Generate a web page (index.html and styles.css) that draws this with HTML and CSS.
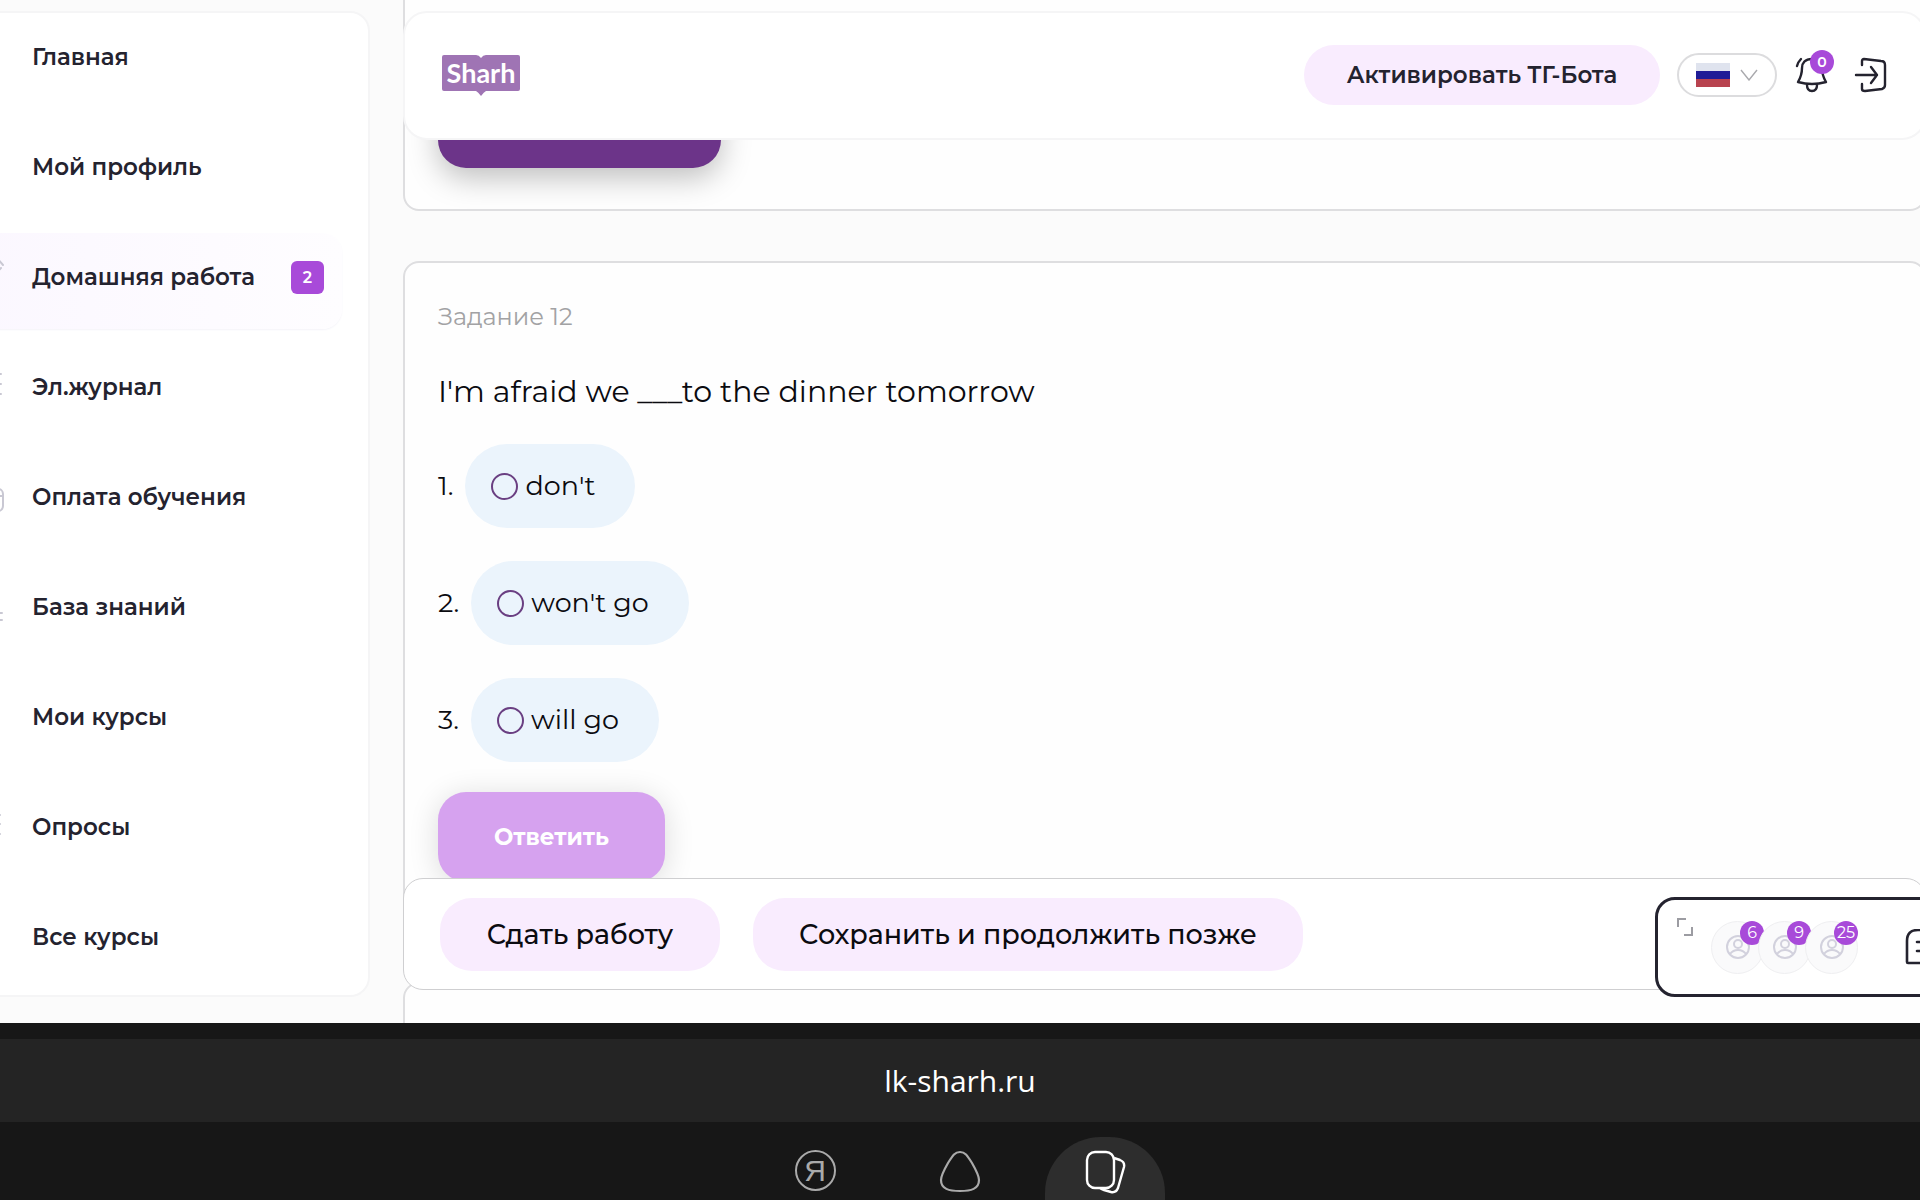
FILE: index.html
```html
<!DOCTYPE html>
<html lang="ru">
<head>
<meta charset="utf-8">
<title>Sharh — Домашняя работа</title>
<link rel="stylesheet" href="styles.css">
</head>
<body>
<div class="app">
  <aside class="sidebar">
    <nav class="menu">
      <a class="menu-item" href="#"><span class="menu-icon"></span>Главная</a>
      <a class="menu-item" href="#"><span class="menu-icon"></span>Мой профиль</a>
      <a class="menu-item active" href="#"><svg class="menu-icon" viewBox="0 0 28 40"><path d="M14 2 L21 1 L27 8 M16 20 L25 11"/></svg>Домашняя работа<span class="count">2</span></a>
      <a class="menu-item" href="#"><svg class="menu-icon" viewBox="0 0 28 40"><path d="M8 7H25M8 17H25M8 27H25"/></svg>Эл.журнал</a>
      <a class="menu-item" href="#"><svg class="menu-icon" viewBox="0 0 28 40"><rect x="1" y="12" width="26" height="22" rx="5"/><path d="M1 19H27"/></svg>Оплата обучения</a>
      <a class="menu-item" href="#"><svg class="menu-icon" viewBox="0 0 28 40"><path d="M14 26H26M14 33H26"/></svg>База знаний</a>
      <a class="menu-item" href="#"><span class="menu-icon"></span>Мои курсы</a>
      <a class="menu-item" href="#"><svg class="menu-icon" viewBox="0 0 28 40"><path d="M8 8H24M8 17H24M8 27H24"/></svg>Опросы</a>
      <a class="menu-item" href="#"><span class="menu-icon"></span>Все курсы</a>
    </nav>
  </aside>

  <main class="main">
    <header class="topbar">
      <a class="logo" href="#">
        <svg class="logo-shape" viewBox="0 0 78 42" aria-hidden="true"><path d="M2 0H34Q37 0 39 3Q41 0 44 0H76Q78 0 78 2V34Q78 36 76 36H44Q42 37 39 41Q36 37 34 36H2Q0 36 0 34V2Q0 0 2 0Z" fill="#9f74b4"/></svg>
        <span class="logo-text">Sharh</span>
      </a>
      <div class="topbar-actions">
        <button class="pill tg" type="button">Активировать ТГ-Бота</button>
        <button class="lang" type="button" aria-label="Русский">
          <span class="flag"></span>
          <svg width="18" height="12" viewBox="0 0 18 12" fill="none" stroke="#a9a9ad" stroke-width="1.4"><path d="M1 1L9 11L17 1"/></svg>
        </button>
        <button class="icon-button" type="button" aria-label="Уведомления">
          <svg width="34" height="36" viewBox="0 0 34 36" fill="none" stroke="#24232f" stroke-width="2.4" stroke-linecap="round" stroke-linejoin="round"><path d="M3 9Q4 5 7 2"/><path d="M18 2C11 2 8 6 8 11C8 17 7 20 4 25Q11 27 18 27T32 25C29 20 28 17 28 11C28 6 25 2 18 2Z"/><path d="M13 28Q13 34 18 34T23 28"/></svg>
          <span class="badge">0</span>
        </button>
        <button class="icon-button" type="button" aria-label="Выйти">
          <svg width="34" height="36" viewBox="0 0 34 36" fill="none" stroke="#24232f" stroke-width="2.4" stroke-linecap="round" stroke-linejoin="round"><path d="M8 8V4Q8 2 10 2L27 4Q31 4 31 8V28Q31 31 28 32L11 34Q8 34 8 32V27M2 18H23M17 10L23 18L17 26"/></svg>
        </button>
      </div>
    </header>

    <div class="feed">
      <section class="card card-previous"><button class="answer answer-ready" type="button" aria-label="Ответить"></button></section>
      <section class="card">
        <h2 class="task-number">Задание 12</h2>
        <p class="question">I'm afraid we ___to the dinner tomorrow</p>
        <ol class="options">
          <li><span>1.</span><label class="option"><input type="radio" name="task12">don't</label></li>
          <li><span>2.</span><label class="option"><input type="radio" name="task12">won't go</label></li>
          <li><span>3.</span><label class="option"><input type="radio" name="task12">will go</label></li>
        </ol>
        <button class="answer" type="button">Ответить</button>
      </section>
      <section class="card card-next"></section>
    </div>

    <footer class="actions">
      <button class="pill submit" type="button">Сдать работу</button>
      <button class="pill save" type="button">Сохранить и продолжить позже</button>
    </footer>
  </main>

  <div class="chat">
    <svg class="expand" width="16" height="18" viewBox="0 0 16 18" fill="none" stroke="#9c9ca2" stroke-width="2"><path d="M1 9V1H9M15 9V17H7"/></svg>
    <div class="avatars">
      <div class="avatar"><svg width="24" height="24" viewBox="0 0 24 24"><circle cx="12" cy="12" r="11"/><circle cx="12" cy="9" r="4"/><path d="M4 19Q7 15 12 15T20 19"/></svg><span class="badge">6</span></div>
      <div class="avatar"><svg width="24" height="24" viewBox="0 0 24 24"><circle cx="12" cy="12" r="11"/><circle cx="12" cy="9" r="4"/><path d="M4 19Q7 15 12 15T20 19"/></svg><span class="badge">9</span></div>
      <div class="avatar"><svg width="24" height="24" viewBox="0 0 24 24"><circle cx="12" cy="12" r="11"/><circle cx="12" cy="9" r="4"/><path d="M4 19Q7 15 12 15T20 19"/></svg><span class="badge">25</span></div>
    </div>
    <svg class="message" width="40" height="36" viewBox="0 0 40 36" fill="none" stroke="#24232f" stroke-width="2.6" stroke-linecap="round" stroke-linejoin="round"><path d="M2 33V12Q2 1 13 1H28Q38 1 38 12V23Q38 34 28 34H3Q2 34 2 33ZM12 13H28M12 22H24"/></svg>
  </div>
</div>

<div class="browser">
  <div class="address">lk-sharh.ru</div>
  <nav class="tabs">
    <button class="tab" type="button" aria-label="Яндекс"><span class="yandex">Я</span></button>
    <button class="tab" type="button" aria-label="Алиса"><svg width="42" height="44" viewBox="0 0 42 44" fill="none" stroke="#aaa" stroke-width="2.2"><path d="M21 2C26 2 28 5 33 13C37 20 40 26 40 30C40 39 32 41 21 41S2 39 2 30C2 26 5 20 9 13C14 5 16 2 21 2Z"/></svg></button>
    <button class="tab current" type="button" aria-label="Вкладки"><svg width="42" height="44" viewBox="0 0 42 44" fill="none" stroke="#fff" stroke-width="2.4" stroke-linejoin="round"><rect x="3" y="2" width="27" height="36" rx="8"/><path d="M30 8L36 10Q41 12 40 17L34 38Q32 43 27 42L20 40Q17 39 16 38"/></svg></button>
  </nav>
</div>
</body>
</html>
```
FILE: styles.css
```css
* { box-sizing: border-box; }

body {
  margin: 0;
  height: 100vh;
  display: flex;
  flex-direction: column;
  overflow: hidden;
  background: #fbfbfb;
  color: #0b0b10;
  font-family: Montserrat, Inter, "Noto Sans", sans-serif;
}

button {
  border: 0;
  padding: 0;
  background: none;
  color: inherit;
  font-family: inherit;
}

.app {
  position: relative;
  flex: 1;
  min-height: 0;
  display: grid;
  grid-template-columns: 370px 1fr;
  column-gap: 33px;
  overflow: hidden;
}

/* Sidebar */
.sidebar {
  margin: 11px 0 26px -40px;
  overflow: hidden;
  background: #fff;
  border: 2px solid #f5f5f6;
  border-radius: 20px;
}

.menu {
  display: flex;
  flex-direction: column;
  gap: 14px;
  padding-right: 26px;
}

.menu-item {
  display: flex;
  align-items: center;
  height: 96px;
  padding: 0 18px 8px 14px;
  border-radius: 20px;
  color: #24232f;
  font-size: 23px;
  font-weight: 600;
  text-decoration: none;
}

.menu-item.active {
  background: linear-gradient(90deg, #fbf7ff, #fefdff);
  box-shadow: 0 1px 2px #f4f3f9;
}

.menu-icon {
  flex: none;
  width: 28px;
  height: 40px;
  margin-right: 28px;
  fill: none;
  stroke: #c9c8d3;
  stroke-width: 2;
  stroke-linecap: round;
}

.count {
  display: grid;
  place-items: center;
  width: 33px;
  height: 33px;
  margin-left: auto;
  border-radius: 6px;
  background: #a84ad9;
  color: #fff;
  font-size: 16px;
  font-weight: 600;
}

/* Main column */
.main {
  position: relative;
  min-width: 0;
  min-height: 0;
  margin-right: -6px;
}

.topbar {
  position: absolute;
  z-index: 1;
  top: 11px;
  left: 0;
  right: 0;
  display: flex;
  justify-content: space-between;
  align-items: center;
  height: 129px;
  padding: 0 36px 2px 37px;
  background: #fff;
  border: 2px solid #f5f5f6;
  border-radius: 24px;
}

.logo {
  display: grid;
  padding-top: 3px;
  color: #fff;
  text-decoration: none;
}

.logo-shape,
.logo-text { grid-area: 1 / 1; }

.logo-shape { width: 78px; height: 42px; }

.logo-text {
  justify-self: center;
  font: bold 27px/36px Lato, sans-serif;
}

.topbar-actions {
  display: flex;
  align-items: center;
  gap: 17px;
}

.pill {
  border-radius: 32px;
  background: #f9ecfe;
}

.tg {
  width: 356px;
  height: 60px;
  color: #24232f;
  font-size: 23px;
  font-weight: 600;
}

.lang {
  display: flex;
  align-items: center;
  justify-content: center;
  gap: 10px;
  width: 100px;
  height: 44px;
  border: 2px solid #dcdcde;
  border-radius: 22px;
}

.flag {
  width: 34px;
  height: 24px;
  background: linear-gradient(#dfe3ee 0 33%, #1f1c96 33% 66%, #b8434f 66%);
}

.icon-button {
  position: relative;
  display: grid;
  margin-right: 9px;
}

.icon-button:last-child { margin-right: 0; }

.badge {
  position: absolute;
  top: -1px;
  right: -1px;
  display: grid;
  place-items: center;
  width: 24px;
  height: 24px;
  border-radius: 50%;
  background: #a84ad9;
  color: #fff;
  font-size: 16px;
}

.icon-button .badge {
  top: -7px;
  right: -6px;
  font-size: 14px;
  font-weight: 600;
}

/* Task cards */
.feed {
  display: flex;
  flex-direction: column;
  gap: 50px;
  margin-top: -20px;
}

.card {
  padding: 40px 33px 48px;
  background: #fefefe;
  border: 2px solid #dedee0;
  border-radius: 16px;
}

.card-previous { padding: 96px 33px 41px; }

.card-next { min-height: 120px; }

.task-number {
  margin: 0;
  color: #a2a2a4;
  font-size: 24px;
  line-height: 28px;
  font-weight: 400;
}

.question {
  margin: 42px 0 0;
  font-size: 30px;
  line-height: 38px;
}

.options {
  display: flex;
  flex-direction: column;
  gap: 33px;
  margin: 33px 0 30px;
  padding: 0;
  list-style: none;
  font-size: 27px;
}

.options li {
  display: flex;
  align-items: center;
  gap: 12px;
}

.option {
  display: flex;
  align-items: center;
  gap: 7px;
  height: 84px;
  padding: 0 40px 0 26px;
  border-radius: 42px;
  background: #ebf4fc;
}

.options li > span,
.option { padding-bottom: 2px; }

.option input {
  appearance: none;
  width: 27px;
  height: 27px;
  margin: 2px 0 0;
  border: 2px solid #6a3f82;
  border-radius: 50%;
}

.answer {
  display: block;
  width: 227px;
  height: 90px;
  border-radius: 28px;
  background: #d6a2ef;
  box-shadow: 0 4px 30px rgba(0, 0, 0, 0.14);
  color: #fff;
  font-size: 23px;
  font-weight: 700;
}

.answer-ready {
  width: 283px;
  background: #6c3489;
  box-shadow: 0 10px 30px rgba(0, 0, 0, 0.25);
}

.actions {
  position: absolute;
  z-index: 1;
  left: 0;
  right: 0;
  bottom: 33px;
  display: flex;
  align-items: center;
  gap: 33px;
  height: 112px;
  padding: 0 36px;
  background: #fff;
  border: 1px solid #cfcfd1;
  border-radius: 20px;
}

.submit,
.save {
  height: 73px;
  font-size: 27px;
  font-weight: 500;
}

.submit { width: 280px; }
.save { width: 550px; }

/* Chat launcher, runs past the right edge */
.chat {
  position: absolute;
  z-index: 2;
  right: -50px;
  bottom: 26px;
  display: flex;
  align-items: center;
  width: 315px;
  height: 100px;
  padding-left: 19px;
  background: #fff;
  border: 3px solid #24232f;
  border-radius: 20px;
}

.expand {
  align-self: flex-start;
  margin-top: 18px;
}

.avatars {
  display: flex;
  margin-left: 18px;
}

.avatar {
  position: relative;
  display: grid;
  place-items: center;
  width: 53px;
  height: 53px;
  margin-right: -6px;
  background: #fafafb;
  border: 1px solid #efeff1;
  border-radius: 50%;
}

.avatar svg {
  fill: none;
  stroke: #d2d1dd;
  stroke-width: 2;
}

.message { margin-left: 53px; }

/* Browser chrome */
.browser {
  padding-top: 16px;
  background: #171717;
}

.address {
  background: #242424;
  color: #fff;
  font: 30px/83px "Open Sans", sans-serif;
  text-align: center;
}

.tabs {
  display: flex;
  justify-content: center;
  gap: 25px;
  height: 78px;
  padding-top: 15px;
  overflow: hidden;
}

.tab {
  display: flex;
  justify-content: center;
  align-items: flex-start;
  width: 120px;
  height: 120px;
  padding-top: 13px;
}

.tab.current {
  border-radius: 56px;
  background: #2d2d2d;
}

.yandex {
  display: grid;
  place-items: center;
  width: 41px;
  height: 41px;
  border: 2px solid #aaa;
  border-radius: 50%;
  color: #aaa;
  font: 30px/34px "Liberation Sans", sans-serif;
}
```
